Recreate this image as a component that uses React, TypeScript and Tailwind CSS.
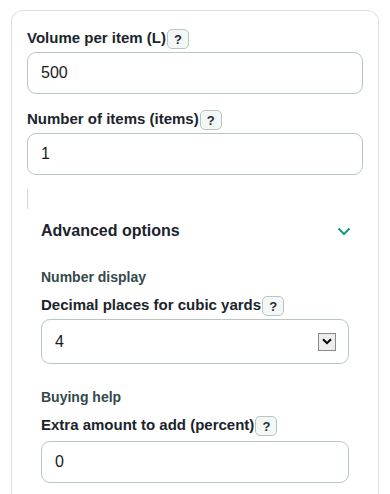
import { useState } from 'react'

function HelpButton() {
  return (
    <button
      type="button"
      className="ml-[1px] mb-[-6px] flex h-[20px] w-[22px] items-center justify-center rounded-[5px] border border-[#b7c5c1] bg-[#f3f7f6] text-[13px] font-bold leading-none text-[#1e2b33]"
    >
      ?
    </button>
  )
}

function FieldLabel({ text }: { text: string }) {
  return (
    <div className="flex h-[20px] items-start">
      <span className="text-[15px] font-bold leading-[18px] text-[#1b242b]">{text}</span>
      <HelpButton />
    </div>
  )
}

function TextField({ label, value }: { label: string; value: string }) {
  const [val, setVal] = useState(value)
  return (
    <div>
      <FieldLabel text={label} />
      <input
        type="text"
        value={val}
        onChange={(e) => setVal(e.target.value)}
        className="mt-[3px] block h-[42px] w-full rounded-[9px] border border-[#b9c7c3] bg-white px-[13px] text-[16px] text-[#1a1a1a] outline-none"
      />
    </div>
  )
}

export default function App() {
  const [open, setOpen] = useState(true)

  return (
    <div className="min-h-screen bg-white pt-[10px] font-['Liberation_Sans',Arial,sans-serif]">
      <div className="mx-[11px] h-[500px] rounded-t-[12px] border border-b-0 border-[#dde3e1] bg-white px-[15px] pt-[18px]">
        <TextField label="Volume per item (L)" value="500" />
        <div className="mt-[16px]">
          <TextField label="Number of items (items)" value="1" />
        </div>

        <div className="mt-[14px] h-[20px] w-px border-l border-[#cfd9d6]" />

        <div className="px-[14px]">
          <button
            type="button"
            onClick={() => setOpen(!open)}
            className="flex h-[44px] w-full items-center justify-between"
          >
            <span className="text-[16px] font-bold text-[#1b242b]">Advanced options</span>
            <svg
              width="14"
              height="9"
              viewBox="0 0 14 9"
              fill="none"
              stroke="#1b9a7c"
              strokeWidth="2"
              className="mr-[-2px]"
            >
              <path d="M1.5 1.5 L7 7 L12.5 1.5" />
            </svg>
          </button>

          {open && (
            <div className="pt-[16px]">
              <div className="text-[14px] font-bold leading-[17px] text-[#34494d]">Number display</div>
              <div className="mt-[10px]">
                <FieldLabel text="Decimal places for cubic yards" />
              </div>
              <div className="relative mt-[3px] flex h-[45px] w-full items-center rounded-[9px] border border-[#b9c7c3] bg-white pl-[13px] pr-[12px]">
                <span className="flex-1 text-[16px] text-[#1a1a1a]">4</span>
                <span className="flex h-[18px] w-[18px] items-center justify-center border border-[#8a8a8a] bg-[#ededed]">
                  <svg width="10" height="7" viewBox="0 0 10 7" fill="none" stroke="#000" strokeWidth="2">
                    <path d="M1 1.2 L5 5.2 L9 1.2" />
                  </svg>
                </span>
              </div>

              <div className="mt-[25px] text-[14px] font-bold leading-[17px] text-[#34494d]">Buying help</div>
              <div className="mt-[10px]">
                <FieldLabel text="Extra amount to add (percent)" />
              </div>
              <input
                type="text"
                defaultValue="0"
                className="mt-[5px] block h-[42px] w-full rounded-[9px] border border-[#b9c7c3] bg-white px-[13px] text-[16px] text-[#1a1a1a] outline-none"
              />
            </div>
          )}
        </div>
      </div>
    </div>
  )
}
